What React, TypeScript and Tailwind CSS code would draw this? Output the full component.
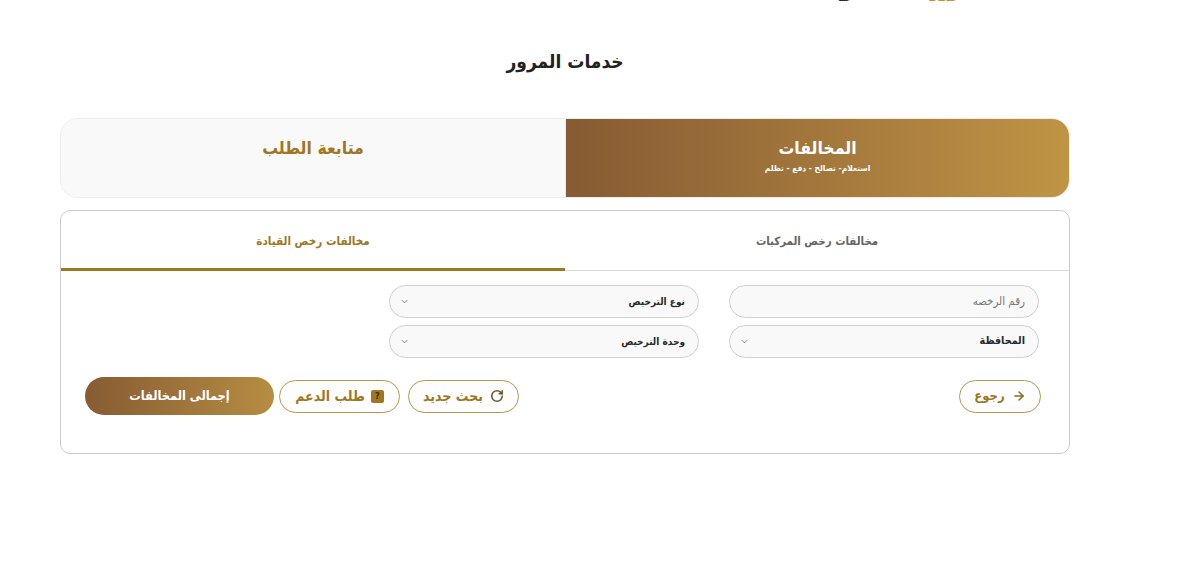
import { ArrowRight, ChevronDown, RotateCw } from "lucide-react";

const font = "font-['DejaVu_Sans_Condensed','DejaVu_Sans',sans-serif]";

function Select({ label, size }: { label: string; size: string }) {
  return (
    <div className="flex h-[33px] w-[310px] items-center justify-between rounded-full border border-[#cfcfcf] bg-[#f9f9f9] pl-[9px] pr-[13px]">
      <span className={`${size} font-bold leading-none text-[#2a2a2a]`}>{label}</span>
      <ChevronDown className="h-[11px] w-[11px] text-[#666666]" strokeWidth={1.5} />
    </div>
  );
}

export default function App() {
  return (
    <div dir="rtl" className={`${font} h-[561px] w-[1200px] overflow-hidden bg-white`}>
      <div className="flex h-[3px] items-end overflow-hidden pr-[242px]">
        <span className="text-[10px] font-bold leading-none text-[#b8912f]">خدمات</span>
        <span className="mr-[76px] text-[11px] font-bold leading-none text-[#222222]">عنا</span>
      </div>

      <div className="mr-[130px] w-[1010px]">
        <h1 className="mt-[46px] h-[24px] text-center text-[19px] font-bold leading-[24px] text-[#222222]">خدمات المرور</h1>

        <div className="mt-[45px] flex h-[80px] overflow-hidden rounded-[18px] border border-[#ececec]">
          <div className="flex w-[503px] flex-col items-center justify-center gap-[3px] bg-gradient-to-l from-[#bf9444] to-[#875b33] pb-[5px] text-white">
            <div className="text-[17.5px] font-bold leading-[22px]">المخالفات</div>
            <div className="text-[8.4px] font-bold leading-[12px]">استعلام- تصالح - دفع - تظلم</div>
          </div>
          <div className="flex flex-1 items-center justify-center border-r border-[#ececec] bg-[#f9f9f9] pb-[19px] text-[17.5px] font-bold text-[#a0771f]">متابعة الطلب</div>
        </div>

        <div className="mt-[12px] h-[244px] rounded-[10px] border border-[#cccccc] bg-white">
          <div className="flex h-[60px] border-b border-[#d9d9d9]">
            <div className="flex w-[504px] items-center justify-center pt-[2px] text-[11.4px] font-bold text-[#666666]">مخالفات رخص المركبات</div>
            <div className="-mb-[1px] flex flex-1 items-center justify-center border-b-[3px] border-[#a0771f] pt-[5px] text-[11.6px] font-bold text-[#a0771f]">مخالفات رخص القيادة</div>
          </div>

          <div className="mr-[30px] mt-[14px] grid w-[650px] grid-cols-[310px_310px] gap-x-[30px] gap-y-[7px]">
            <div className="flex h-[33px] items-center rounded-full border border-[#cfcfcf] bg-[#f9f9f9] pr-[13px] text-[11.4px] text-[#777777]">رقم الرخصه</div>
            <Select label="نوع الترخيص" size="text-[10px]" />
            <Select label="المحافظة" size="text-[10.7px]" />
            <Select label="وحدة الترخيص" size="text-[10px]" />
          </div>

          <div className="mt-[19px] flex items-center justify-between pl-[24px] pr-[28px]">
            <button className="flex h-[33px] w-[82px] items-center justify-center gap-[7px] rounded-full border border-[#b8954a] bg-[#fdfdfd] text-[13px] font-bold text-[#a0771f]">
              <ArrowRight className="h-[14px] w-[14px] text-[#86691f]" strokeWidth={2.5} />
              رجوع
            </button>
            <div className="flex items-center">
              <button className="flex h-[33px] w-[111px] items-center justify-center gap-[7px] rounded-full border border-[#b8954a] bg-[#fdfdfd] text-[14px] font-bold text-[#a0771f]">
                <RotateCw className="h-[14px] w-[14px] text-[#6b5a30]" strokeWidth={2.75} />
                بحث جديد
              </button>
              <button className="mr-[8px] flex h-[33px] w-[121px] items-center justify-center gap-[6px] rounded-full border border-[#b8954a] bg-[#fdfdfd] text-[14px] font-bold text-[#a0771f]">
                <span className="flex h-[13px] w-[13px] items-center justify-center rounded-[2px] bg-[#a0771f] text-[9px] leading-none text-[#3a2c08]">?</span>
                طلب الدعم
              </button>
              <button className="mr-[5px] flex h-[38px] w-[189px] items-center justify-center rounded-full bg-gradient-to-l from-[#b68d42] to-[#875b33] text-[12.7px] font-bold text-white">إجمالى المخالفات</button>
            </div>
          </div>
        </div>
      </div>
    </div>
  );
}
